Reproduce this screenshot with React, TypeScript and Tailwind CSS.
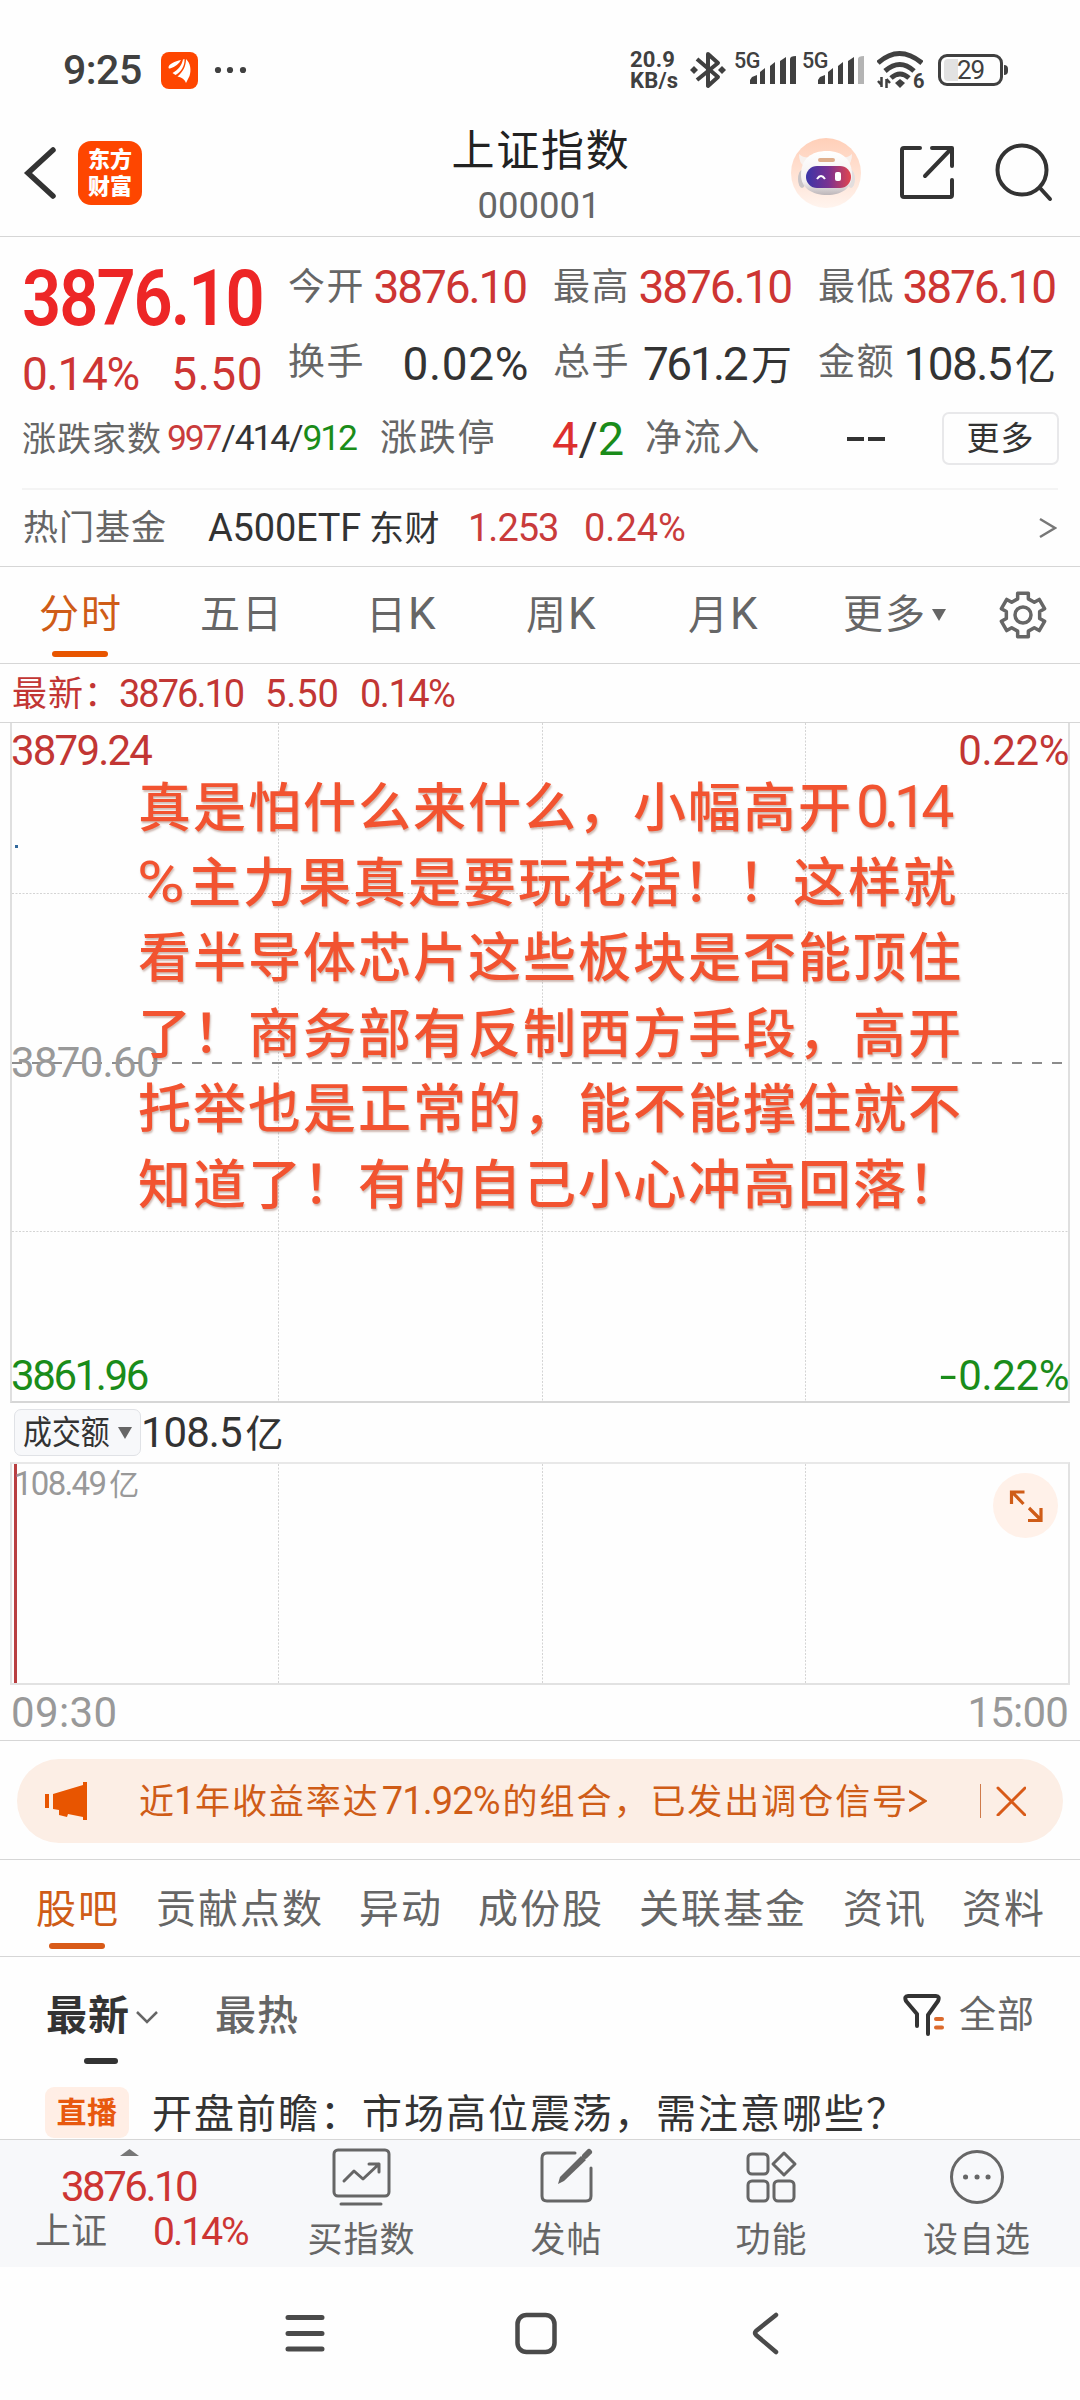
import React from "react";

const font = "font-[Roboto,'Noto_Sans_CJK_SC',sans-serif]";

function StatusBar() {
  return (
    <div className="flex h-[104px] items-start pt-[50px] text-[#404040]">
      <div className="ml-[63px] h-10 w-[98px] text-[41px] font-medium leading-[40px] tracking-[-0.500px]">9:25</div>
      <svg className="mt-[2px] h-[37px] w-[37px]" viewBox="0 0 37 37">
        <rect width="37" height="37" rx="8" fill="#fe4600" />
        <path d="M7.500 15.500C7.500 12 14 9.500 20 8c-2 4-5.500 6.500-11 8.500-1 .3-1.500 0-1.500-1z M11.500 21C17 18 20.500 14 22 7.500l1.500-.5C24 14 20 20 14.500 23z M16.500 24.500C22 20 25 14 25 7c4.500 4 5.500 11 3.500 17l-3.500 7c-1-3-3.500-5.500-8.500-6.500z" fill="#fff" />
      </svg>
      <svg className="ml-4 mt-[2px] h-9 w-9" viewBox="0 0 36 36" fill="#404040">
        <circle cx="4" cy="18" r="3.100" /><circle cx="16" cy="18" r="3.100" /><circle cx="29" cy="18" r="3.100" />
      </svg>
      <div className="-mt-px ml-[380px] w-[60px] text-[22px] font-bold leading-[21px] tracking-[0.200px]">
        <div>20.9</div>
        <div>KB/s</div>
      </div>
      <svg className="h-10 w-[36px]" viewBox="0 0 36 40" fill="none" stroke="#404040" strokeWidth="4">
        <path d="M7 9l21 18-10 9V4l10 9L7 30" strokeLinejoin="round" />
        <path d="M4 16l4 4-4 4-4-4zM32 16l4 4-4 4-4-4z" fill="#404040" stroke="none" />
      </svg>
      {[false, true].map((weak) => (
        <div key={String(weak)} className="ml-[8px] flex w-[60px]">
          <span className="w-[16px] text-[21.500px] font-medium leading-[21px] tracking-[-0.500px]">5G</span>
          <svg className="h-[36px] w-[46px] shrink-0" viewBox="0 0 46 36" fill="#404040">
            <path d="M0 34v-4l2-3 5-2v9zM10 34V22l5-4v16zM20 34V16l5-4v22zM30 34V11l6-4v27z" />
            <path d="M40 34V9q0-3 6-3v28z" fill={weak ? "#b4b4b4" : "#404040"} />
          </svg>
        </div>
      ))}
      <div className="relative ml-[15px] h-10 w-[46px]">
        <svg className="h-10 w-[46px]" viewBox="0 0 46 40" fill="none" stroke="#404040" strokeWidth="5">
          <path d="M1 13Q22-6 45 13M8 21q15-13 29 0M14 28q9-8 18 0" />
          <path d="M23 29l5 4-5 5-5-5z" fill="#404040" stroke="none" />
          <path d="M4.500 27v10M1 31l3.500 4M9.500 38v-9M13 33l-3.500-4" strokeWidth="2.500" />
        </svg>
        <span className="absolute left-[36px] top-[22px] text-[20px] font-bold leading-[18px]">6</span>
      </div>
      <div className="relative ml-[15px] mt-1 flex h-[32px] w-[65px] items-center justify-center rounded-[9px] border-[3px] border-[#404040] text-[26px] leading-none tracking-[-1px]">
        <span className="absolute left-[3px] top-[2px] h-[22px] w-[14px] rounded-l-[4px] bg-[#e2e2e2]" />
        <span className="relative">29</span>
        <span className="absolute -right-[8px] top-[8px] h-[10px] w-[4px] rounded-r-full bg-[#404040]" />
      </div>
    </div>
  );
}

function Robot() {
  return (
    <svg className="h-[70px] w-[70px]" viewBox="0 0 70 70">
      <defs>
        <linearGradient id="halo" x2="0" y2="1"><stop stopColor="#ffcfb8" /><stop offset="1" stopColor="#fff4ee" /></linearGradient>
        <linearGradient id="shell" x2="0" y2="1"><stop stopColor="#fff" /><stop offset=".7" stopColor="#f3efef" /><stop offset="1" stopColor="#bdb6b9" /></linearGradient>
        <linearGradient id="visor"><stop stopColor="#3a35a8" /><stop offset=".5" stopColor="#7a3191" /><stop offset="1" stopColor="#e2454e" /></linearGradient>
      </defs>
      <circle cx="35" cy="35" r="35" fill="url(#halo)" />
      <path d="M8 16q0 9 5 12l9-9q-9 2-14-3zM61 16q0 9-5 12l-9-9q9 2 14-3z" fill="#f8f1ee" />
      <ellipse cx="11" cy="41" rx="4" ry="9" fill="#c9c4c6" /><ellipse cx="60" cy="41" rx="4" ry="9" fill="#e3dede" />
      <path d="M10 37C10 21 20 13 36 13s25 9 25 24c0 13-10 20-25 20S10 50 10 37z" fill="url(#shell)" />
      <rect x="27" y="20" width="17" height="4" rx="2" fill="#dfae8c" />
      <rect x="15" y="28" width="45" height="22" rx="11" fill="url(#visor)" />
      <path d="M26 41q4-6 8 0" fill="none" stroke="#fff" strokeWidth="2" />
      <rect x="44" y="34" width="6" height="9" rx="2" fill="#fff" />
    </svg>
  );
}

function Header() {
  return (
    <header className="flex h-[133px] border-b border-[#d6d6d6]">
      <svg className="ml-[23px] mt-[42px] h-[54px] w-[34px]" viewBox="0 0 34 54" fill="none" stroke="#333" strokeWidth="5.500" strokeLinecap="round">
        <path d="M30 4L5 27l25 23" />
      </svg>
      <div className="ml-[21px] mt-[37px] flex h-[64px] w-[64px] flex-col items-center justify-center rounded-[13px] bg-[#fe4600] text-[22px] font-black leading-[27px] text-white">
        <span>东方</span><span>财富</span>
      </div>
      <div className="ml-[295px] w-[208px] pt-[21px] text-center">
        <div className="text-[43px] leading-[52px] tracking-[1.800px] text-[#222]">上证指数</div>
        <div className="-ml-[4px] mt-[3px] text-[36.500px] leading-[52px] text-[#666]">000001</div>
      </div>
      <div className="ml-[146px] mt-[34px]"><Robot /></div>
      <svg className="ml-[37px] mt-[40px] h-[58px] w-[58px]" viewBox="0 0 58 58" fill="none" stroke="#333" strokeWidth="4" strokeLinecap="round" strokeLinejoin="round">
        <path d="M22 4H6q-2 0-2 2v45q0 2 2 2h46q2 0 2-2V36M34 4h20v18M53 5L27 32" />
      </svg>
      <svg className="ml-[39px] mt-[38px] h-[60px] w-[60px]" viewBox="0 0 60 60" fill="none" stroke="#333" strokeWidth="4" strokeLinecap="round">
        <circle cx="27" cy="28" r="24.500" /><path d="M45 46l10 11" />
      </svg>
    </header>
  );
}

function Stat({ label, children, dark }: { label: string; children: React.ReactNode; dark?: boolean }) {
  return (
    <div className="flex items-center justify-between">
      <span className="text-[37px] tracking-[1.500px] text-[#666]">{label}</span>
      <span className={dark ? "pt-[2px] text-[46px] text-[#333]" : "pr-[1px] text-[46px] tracking-[-2.100px] text-[#cd3533]"}>{children}</span>
    </div>
  );
}

function Quote() {
  return (
    <section className="h-[330px] border-b border-[#d6d6d6]">
      <div className="flex h-[163px] pt-[12px] leading-none">
        <div className="ml-[22px] w-[266px] whitespace-nowrap">
          <div className="h-[94px] origin-left scale-x-[.88] text-[78px] font-semibold leading-[99px] tracking-[-2.300px] text-[#ed2626]">3876.10</div>
          <div className="flex h-[62px] items-center justify-between pr-[25px] text-[46px] text-[#cd3533]">
            <span className="tracking-[-1.300px]">0.14%</span><span className="tracking-[0.500px]">5.50</span>
          </div>
        </div>
        <div className="grid h-[150px] w-[768px] grid-cols-[239px_239px_238px] grid-rows-[76px_75px] gap-x-[26px] whitespace-nowrap">
          <Stat label="今开">3876.10</Stat>
          <Stat label="最高">3876.10</Stat>
          <Stat label="最低">3876.10</Stat>
          <Stat label="换手" dark><span className="-mr-[2px] tracking-[0.600px]">0.02%</span></Stat>
          <Stat label="总手" dark><span className="tracking-[-2.500px]">761.2</span><span className="ml-[5px] text-[41px]">万</span></Stat>
          <Stat label="金额" dark><span className="tracking-[-1.600px]">108.5</span><span className="ml-[4px] text-[41px]">亿</span></Stat>
        </div>
      </div>
      <div className="mx-[22px] flex h-[90px] items-center whitespace-nowrap border-b-2 border-[#f4f4f4] pb-[11px] leading-none">
        <span className="w-[145px] text-[34px] tracking-[1px] text-[#666]">涨跌家数</span>
        <span className="w-[213px] text-[35.500px] tracking-[-2.200px] text-[#333]"><span className="text-[#c93b3b]">997</span><span className="mx-[1px]">/</span>414<span className="mx-[1px]">/</span><span className="text-[#1a8c1a]">912</span></span>
        <span className="w-[172px] text-[37px] tracking-[1.700px] text-[#666]">涨跌停</span>
        <span className="w-[93px] text-[47px] text-[#333]"><span className="text-[#dd302e]">4</span>/<span className="text-[#1a8c1a]">2</span></span>
        <span className="w-[202px] text-[37px] tracking-[1.700px] text-[#666]">净流入</span>
        <span className="flex gap-[4px]"><i className="h-[4px] w-[17px] bg-[#333]" /><i className="h-[4px] w-[17px] bg-[#333]" /></span>
        <span className="-mr-px ml-auto flex h-[53px] w-[117px] items-center justify-center rounded-[7px] border-2 border-[#e8e8ea] text-[33px] tracking-[1px] text-[#333]">更多</span>
      </div>
      <div className="mx-[23px] flex h-[76px] items-center whitespace-nowrap leading-none">
        <span className="w-[185px] text-[35px] tracking-[1px] text-[#666]">热门基金</span>
        <span className="w-[260px] text-[38px] tracking-[-0.200px] text-[#333]">A500ETF<span className="ml-[8px] text-[35px] tracking-[0.500px]">东财</span></span>
        <span className="w-[116px] text-[38px] tracking-[-1px] text-[#c93b3b]">1.253</span>
        <span className="text-[38px] text-[#c93b3b]">0.24%</span>
        <svg className="ml-auto h-[22px] w-[18px]" viewBox="0 0 18 22" fill="none" stroke="#777" strokeWidth="2.500"><path d="M1 2l15 9-15 9" /></svg>
      </div>
    </section>
  );
}

function Gear() {
  const pts: string[] = [];
  for (let i = 0; i < 6; i++) {
    const a = (i * Math.PI) / 3 - Math.PI / 2;
    [[-0.32, 17], [-0.24, 22.5], [0.24, 22.5], [0.32, 17]].forEach(([d, r]) =>
      pts.push(`${24 + r * Math.cos(a + d)},${24 + r * Math.sin(a + d)}`)
    );
  }
  return (
    <svg className="h-[48px] w-[48px]" viewBox="0 0 48 48" fill="none" stroke="#666" strokeWidth="3.500" strokeLinejoin="round">
      <polygon points={pts.join(" ")} /><circle cx="24" cy="24" r="8" />
    </svg>
  );
}

function PeriodTabs() {
  return (
    <nav className="flex h-[97px] items-center whitespace-nowrap border-b border-[#d6d6d6] text-[40px] leading-[98px] tracking-[2px] text-[#666]">
      <div className="relative ml-[39px] w-[161px] text-[#cf5c17]">
        分时
        <span className="absolute bottom-[7px] left-[13px] h-[6px] w-[56px] rounded-full bg-[#e85500]" />
      </div>
      <div className="w-[166px]">五日</div>
      <div className="w-[160px]">日<span className="text-[44px]">K</span></div>
      <div className="w-[162px]">周<span className="text-[44px]">K</span></div>
      <div className="w-[155px]">月<span className="text-[44px]">K</span></div>
      <div className="flex items-center">
        更多
        <svg className="ml-[5px] h-[12px] w-[14px]" viewBox="0 0 14 12" fill="#666"><path d="M0 0h14L7 12z" /></svg>
      </div>
      <div className="ml-[53px]"><Gear /></div>
    </nav>
  );
}

const comment = [
  "看半导体芯片这些板块是否能顶住",
  "了！商务部有反制西方手段，高开",
  "托举也是正常的，能不能撑住就不",
  "知道了！有的自己小心冲高回落！",
];

function PriceChart() {
  return (
    <section>
      <div className="flex h-[59px] items-center whitespace-nowrap border-b border-[#d6d6d6] pt-[2px] text-[38px] leading-none text-[#c23634]">
        <span className="ml-[12px] w-[107px] text-[35px] tracking-[1px]">最新：</span>
        <span className="w-[146px] tracking-[-2px]">3876.10</span>
        <span className="w-[95px] tracking-[-0.100px]">5.50</span>
        <span className="tracking-[-1.500px]">0.14%</span>
      </div>
      <div className="relative mx-[10px] h-[680px] border-x-2 border-b-2 border-x-[#dfdfdf] border-b-[#d6d6d6] text-[42px] leading-none">
        <svg className="absolute inset-0 h-full w-full" viewBox="0 0 1056 678" fill="none">
          <path d="M266.500 0v678M530.500 0v678M793.500 0v678M0 170.500h1056M0 508.500h1056" stroke="#d4d4d4" strokeWidth="1" strokeDasharray="2 1.500" />
          <path d="M0 340h1050" stroke="#8c8c8c" strokeWidth="2" strokeDasharray="10 10" />
          <path d="M3 122h3v3h-3z" fill="#33699c" />
        </svg>
        <span className="absolute left-[-1px] top-[7px] tracking-[-1.800px] text-[#c23634]">3879.24</span>
        <span className="absolute right-[-1px] top-[7px] tracking-[-0.400px] text-[#c23634]">0.22%</span>
        <span className="absolute left-[-1px] top-[319px] tracking-[-0.700px] text-[#999]">3870.60</span>
        <span className="absolute bottom-[4px] left-[-1px] tracking-[-2.400px] text-[#1a8c1a]">3861.96</span>
        <span className="absolute bottom-[4px] right-[-1px] flex text-[#1a8c1a]"><span className="mr-[2px] inline-block origin-right scale-x-[1.450]">-</span><span className="tracking-[-0.400px]">0.22%</span></span>
        <div className="absolute left-[126px] top-[46px] whitespace-nowrap text-[53px] font-medium leading-[75.600px] tracking-[2px] text-[#f25330] [text-shadow:1px_2px_2px_rgba(120,60,40,0.35)]">
          <div className="h-[77.600px]">真是怕什么来什么，小幅高开<span className="ml-[3px] text-[59px] font-normal tracking-[-5.500px]">0.14</span></div>
          <div className="h-[75.600px]"><span className="-ml-px inline-block w-[51px] origin-left scale-x-[1.120] text-[58px] font-normal leading-none tracking-normal">%</span>主力果真是要玩花活！！这样就</div>
          {comment.map((line) => <div key={line} className="h-[75.600px]">{line}</div>)}
        </div>
      </div>
    </section>
  );
}

function VolumeChart() {
  return (
    <section className="h-[338px] border-b border-[#d6d6d6]">
      <div className="flex h-[59px] items-center whitespace-nowrap leading-none">
        <div className="ml-[14px] flex h-[47px] w-[127px] items-center rounded-[7px] border border-[#e0e2e6] bg-[#f7f8fa] pl-[8px] text-[#333]">
          <span className="w-[95px] origin-left scale-x-[.875] text-[33px]">成交额</span>
          <svg className="h-[12px] w-[14px]" viewBox="0 0 14 12" fill="#666"><path d="M0 0h14L7 12z" /></svg>
        </div>
        <span className="text-[42px] tracking-[-1px] text-[#333]">108.5<span className="ml-[4px] text-[38px]">亿</span></span>
      </div>
      <div className="relative mx-[10px] h-[223px] border-2 border-[#e2e2e2] border-t-[#e8e8e8]">
        <svg className="absolute inset-0 h-full w-full" viewBox="0 0 1056 219" fill="none">
          <path d="M266.500 0v219M530.500 0v219M793.500 0v219" stroke="#d4d4d4" strokeDasharray="2 1.500" />
          <path d="M3.500 0v221" stroke="#b93f41" strokeWidth="3" />
        </svg>
        <span className="absolute left-[2px] top-[2px] whitespace-nowrap text-[33px] leading-[36px] tracking-[-1.700px] text-[#999]">108.49<span className="ml-[4px] text-[30px]">亿</span></span>
        <svg className="absolute right-[10px] top-[9px] h-[65px] w-[65px]" viewBox="0 0 65 65" fill="none">
          <circle cx="32.500" cy="32.500" r="32.500" fill="#fff1e9" />
          <path d="M18.500 31V19h13M20 20l10.500 11M48 35v12.500H35M47 46L36 35" stroke="#cf5c17" strokeWidth="3.200" />
        </svg>
      </div>
      <div className="ml-[11px] mr-[12px] flex h-[55px] items-center justify-between pt-[1px] text-[42px] leading-none text-[#999]">
        <span className="tracking-[0.400px]">09:30</span><span className="tracking-[-0.800px]">15:00</span>
      </div>
    </section>
  );
}

function Banner() {
  return (
    <div className="h-[119px] border-b border-[#d6d6d6] pt-[18px]">
      <div className="mx-[17px] flex h-[84px] items-center whitespace-nowrap rounded-full bg-[#fceee5] leading-none text-[#cf5c17]">
        <svg className="ml-[28px] h-[38px] w-[43px] shrink-0" viewBox="0 0 43 38" fill="#e85500"><path d="M0 12h4v14H0zM8 12l30-9V0h4v38h-4v-3l-15-3-1 3-8-2v-5l-6-1z" /></svg>
        <div className="ml-[51px] w-[841px] shrink-0 text-[35px] tracking-[1.950px]">
          近<span className="mx-[1px] inline-block w-[17px] -indent-[3px] text-[38px] tracking-normal">1</span>年收益率达<span className="ml-[2px] mr-[3px] text-[38px] tracking-[-0.900px]">71.92%</span>的组合，已发出调仓信号
          <svg className="inline h-[24px] w-[18px] align-[1px]" viewBox="0 0 18 24" fill="none" stroke="#cf5c17" strokeWidth="3"><path d="M0 2l16 10L0 22" /></svg>
        </div>
        <span className="h-[34px] w-px bg-[#cf7a4a]" />
        <svg className="ml-[15px] h-[30px] w-[30px]" viewBox="0 0 30 30" stroke="#d85a18" strokeWidth="3" strokeLinecap="round"><path d="M2 2l27 27M29 2L2 29" /></svg>
      </div>
    </div>
  );
}

function Forum() {
  return (
    <section className="h-[280px] overflow-hidden border-b border-[#d6d6d6] whitespace-nowrap">
      <nav className="flex h-[97px] border-b border-[#d6d6d6] text-[40px] leading-[99px] tracking-[2px] text-[#666]">
        <div className="relative ml-[36px] w-[120px] text-[#cf5c17]">
          股吧
          <span className="absolute bottom-[7px] left-[13px] h-[6px] w-[56px] rounded-full bg-[#d85a18]" />
        </div>
        <div className="w-[203px]">贡献点数</div>
        <div className="w-[119px]">异动</div>
        <div className="w-[161px]">成份股</div>
        <div className="w-[204px]">关联基金</div>
        <div className="w-[119px]">资讯</div>
        <div>资料</div>
      </nav>
      <div className="flex h-[127px] items-start text-[41px] leading-[119px] tracking-[1px]">
        <div className="relative ml-[46px] flex w-[169px] items-center font-bold text-[#333]">
          最新
          <svg className="ml-[6px] h-[14px] w-[22px]" viewBox="0 0 22 14" fill="none" stroke="#666" strokeWidth="2.500"><path d="M1 2l10 10L21 2" /></svg>
          <span className="absolute left-[38px] top-[101px] h-[6px] w-[34px] rounded-full bg-[#333]" />
        </div>
        <div className="font-medium text-[#666]">最热</div>
        <svg className="ml-[604px] mt-[36px] h-[44px] w-[42px]" viewBox="0 0 42 44" fill="none" stroke="#333" strokeWidth="4" strokeLinecap="round" strokeLinejoin="round">
          <path d="M14 33V21L3 8q-2-5 2-5h28q4 0 2 5L25 22v19" />
          <path d="M33 26h6M33 34.500h6" stroke="#dc6a2c" />
        </svg>
        <div className="ml-[14px] text-[37px] leading-[117px] text-[#666]">全部</div>
      </div>
      <div className="flex h-[60px] items-center">
        <span className="-mt-[3px] ml-[45px] flex h-[51px] w-[84px] items-center justify-center rounded-[9px] bg-[#ffeee5] text-[30px] font-bold leading-[51px] tracking-[0.500px] text-[#e8590f]">直播</span>
        <span className="ml-[23px] text-[40px] leading-[51px] tracking-[2px] text-[#333]">开盘前瞻：市场高位震荡，需注意哪些？</span>
      </div>
    </section>
  );
}

const iconCls = "h-[60px] w-[60px]";

function BottomBar() {
  const items = [
    { label: "买指数", x: "w-[205px]", icon: <><rect x="2" y="3" width="55" height="46" rx="4" /><path d="M12 34l10-10 9 8 16-15M37 17h10v8M9 57h40" /></> },
    { label: "发帖", x: "w-[205px]", icon: <><path d="M38 6H10q-5 0-5 5v38q0 5 5 5h39q5 0 5-5V21" /><path d="M21 37l2-7L44 9l5 4-22 21z" fill="#666" stroke="none" /><path d="M48 9l4-4" strokeWidth="6" /></> },
    { label: "功能", x: "w-[205px]", icon: <><rect x="6" y="7" width="20" height="20" rx="4" /><rect x="6" y="34" width="20" height="20" rx="4" /><rect x="32" y="34" width="20" height="20" rx="4" /><path d="M42 6L53 17 42 28 31 17z" /></> },
    { label: "设自选", x: "w-[206px]", icon: <><circle cx="30" cy="30" r="25.500" /><path d="M18.500 30h.1M30 30h.1M41 30h.1" strokeWidth="5" /></> },
  ];
  return (
    <div className="flex h-[127px] whitespace-nowrap bg-[#f7f8fa] leading-none text-[#666]">
      <div className="w-[259px]">
        <svg className="ml-[120px] mt-[9px] h-[7px] w-[19px]" viewBox="0 0 19 7" fill="#777"><path d="M0 7L9.500 0 19 7z" /></svg>
        <div className="ml-[61px] mt-[10px] text-[42px] tracking-[-2.500px] text-[#cd3533]">3876.10</div>
        <div className="ml-[35px] mt-[2px] flex h-[44px] items-center text-[36px]">
          <span>上证</span><span className="ml-[46px] text-[39px] tracking-[-2px] text-[#cd3533]">0.14%</span>
        </div>
      </div>
      {items.map((it) => (
        <div key={it.label} className={`${it.x} flex flex-col items-center`}>
          <svg className={`${iconCls} mt-[7px]`} viewBox="0 0 60 60" fill="none" stroke="#666" strokeWidth="3" strokeLinecap="round" strokeLinejoin="round">{it.icon}</svg>
          <span className="mt-[16px] text-[35px] tracking-[1px]">{it.label}</span>
        </div>
      ))}
    </div>
  );
}

function SystemNav() {
  return (
    <div className="flex h-[133px] items-start pt-[44px]">
      <svg className="ml-[285px] h-[44px] w-[40px]" viewBox="0 0 40 44" stroke="#4a4a4a" strokeWidth="5" strokeLinecap="round"><path d="M3 6.500h34M3 22.500h34M3 38h34" /></svg>
      <svg className="ml-[189px] h-[44px] w-[44px]" viewBox="0 0 44 44" fill="none" stroke="#4a4a4a" strokeWidth="4.500"><rect x="3.500" y="4" width="37" height="37" rx="9" /></svg>
      <svg className="ml-[193px] h-[44px] w-[30px]" viewBox="0 0 30 44" fill="none" stroke="#4a4a4a" strokeWidth="4.500" strokeLinecap="round" strokeLinejoin="round"><path d="M25 4L5 20q-2 2 0 4l20 17" /></svg>
    </div>
  );
}

export default function App() {
  return (
    <div className={`${font} h-[2400px] w-[1080px] overflow-hidden bg-[#fefefe]`}>
      <StatusBar />
      <Header />
      <Quote />
      <PeriodTabs />
      <PriceChart />
      <VolumeChart />
      <Banner />
      <Forum />
      <BottomBar />
      <SystemNav />
    </div>
  );
}
